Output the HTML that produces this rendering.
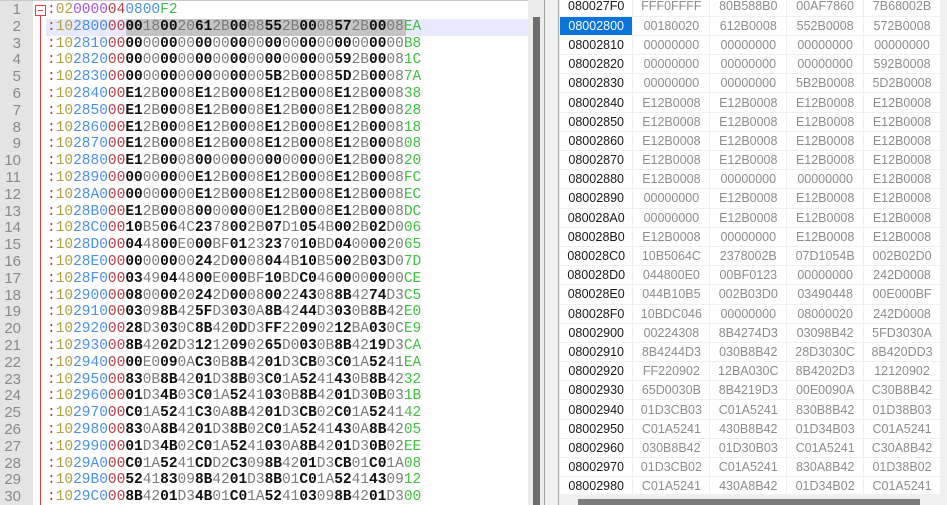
<!DOCTYPE html>
<html><head><meta charset="utf-8"><style>
*{margin:0;padding:0;box-sizing:border-box}
body{width:947px;height:505px;overflow:hidden;background:#f0f0f0;position:relative;font-family:"Liberation Sans",sans-serif}
#ed{position:absolute;left:0;top:0;width:528px;height:505px;background:#fff;border-top:1px solid #c8c8c8;overflow:hidden}
#gut{position:absolute;left:0;top:0;width:33px;height:505px;background:#e4e4e4}
#fold{position:absolute;left:40px;top:14px;width:1px;height:491px;background:#e04040}
#fbox{position:absolute;left:35px;top:4px;width:11px;height:11px;border:1px solid #e04040;background:#fff}
#fbox:after{content:"";position:absolute;left:2px;top:4px;width:5px;height:1px;background:#e04040}
#hl{position:absolute;left:46px;top:18px;width:482px;height:17px;background:#e8e8ff}
#sel{position:absolute;left:126px;top:18px;width:280px;height:17px;background:#c4c4c4}
#nums{position:absolute;left:0;top:1px;width:21px;text-align:right;font:15px/16.8px "Liberation Sans",sans-serif;color:#8a8a8a}
#code{position:absolute;left:47px;top:1px;font:14.5px/16.8px "Liberation Mono",monospace;white-space:nowrap;color:#888}
#code p{height:16.8px;white-space:nowrap}
r{color:#b04048}o{color:#b0a040}a{color:#4a90e8}u{color:#b050e0;text-decoration:none}
b{color:#111;font-weight:bold}i{font-style:normal;color:#7a7a7a}g{color:#40c040}
#vs{position:absolute;left:528px;top:0;width:17px;height:505px;background:#ececec;border-right:1px solid #a0a0a0}
#vs div{position:absolute;left:5px;top:17px;width:7px;height:488px;background:#6e6e6e}
#rp{position:absolute;left:558px;top:0;width:389px;height:505px;background:#f0f0f0;border-left:1px solid #a8a8a8}
#tb{position:absolute;left:1px;top:0;width:381px;height:494px;background:#fff;overflow:hidden}
table{border-collapse:collapse;position:absolute;left:0;top:-3px;font-size:12.5px}
td{height:19.2px;border-bottom:1px solid #edf0f3;border-right:1px solid #edf0f3;color:#8c8c8c;text-align:center;padding:0}
td:first-child{color:#1a1a1a;width:74px}
td.c{width:78px}
td.s{background:#0a74d8;color:#fff}
#hs{position:absolute;left:19px;top:499px;width:342px;height:6px;background:#7c7c7c}
</style></head><body>
<div id="ed">
<div id="gut"></div>
<div id="hl"></div><div id="sel"></div>
<div id="fold"></div><div id="fbox"></div>
<div id="nums">1<br>2<br>3<br>4<br>5<br>6<br>7<br>8<br>9<br>10<br>11<br>12<br>13<br>14<br>15<br>16<br>17<br>18<br>19<br>20<br>21<br>22<br>23<br>24<br>25<br>26<br>27<br>28<br>29<br>30</div>
<div id="code"><p><r>:</r><o>02</o><u>0000</u><r>04</r><a>0800</a><g>F2</g></p><p><r>:</r><o>10</o><a>2800</a><r>00</r><b>00</b><i>18</i><b>00</b><i>20</i><b>61</b><i>2B</i><b>00</b><i>08</i><b>55</b><i>2B</i><b>00</b><i>08</i><b>57</b><i>2B</i><b>00</b><i>08</i><g>EA</g></p><p><r>:</r><o>10</o><a>2810</a><r>00</r><b>00</b><i>00</i><b>00</b><i>00</i><b>00</b><i>00</i><b>00</b><i>00</i><b>00</b><i>00</i><b>00</b><i>00</i><b>00</b><i>00</i><b>00</b><i>00</i><g>B8</g></p><p><r>:</r><o>10</o><a>2820</a><r>00</r><b>00</b><i>00</i><b>00</b><i>00</i><b>00</b><i>00</i><b>00</b><i>00</i><b>00</b><i>00</i><b>00</b><i>00</i><b>59</b><i>2B</i><b>00</b><i>08</i><g>1C</g></p><p><r>:</r><o>10</o><a>2830</a><r>00</r><b>00</b><i>00</i><b>00</b><i>00</i><b>00</b><i>00</i><b>00</b><i>00</i><b>5B</b><i>2B</i><b>00</b><i>08</i><b>5D</b><i>2B</i><b>00</b><i>08</i><g>7A</g></p><p><r>:</r><o>10</o><a>2840</a><r>00</r><b>E1</b><i>2B</i><b>00</b><i>08</i><b>E1</b><i>2B</i><b>00</b><i>08</i><b>E1</b><i>2B</i><b>00</b><i>08</i><b>E1</b><i>2B</i><b>00</b><i>08</i><g>38</g></p><p><r>:</r><o>10</o><a>2850</a><r>00</r><b>E1</b><i>2B</i><b>00</b><i>08</i><b>E1</b><i>2B</i><b>00</b><i>08</i><b>E1</b><i>2B</i><b>00</b><i>08</i><b>E1</b><i>2B</i><b>00</b><i>08</i><g>28</g></p><p><r>:</r><o>10</o><a>2860</a><r>00</r><b>E1</b><i>2B</i><b>00</b><i>08</i><b>E1</b><i>2B</i><b>00</b><i>08</i><b>E1</b><i>2B</i><b>00</b><i>08</i><b>E1</b><i>2B</i><b>00</b><i>08</i><g>18</g></p><p><r>:</r><o>10</o><a>2870</a><r>00</r><b>E1</b><i>2B</i><b>00</b><i>08</i><b>E1</b><i>2B</i><b>00</b><i>08</i><b>E1</b><i>2B</i><b>00</b><i>08</i><b>E1</b><i>2B</i><b>00</b><i>08</i><g>08</g></p><p><r>:</r><o>10</o><a>2880</a><r>00</r><b>E1</b><i>2B</i><b>00</b><i>08</i><b>00</b><i>00</i><b>00</b><i>00</i><b>00</b><i>00</i><b>00</b><i>00</i><b>E1</b><i>2B</i><b>00</b><i>08</i><g>20</g></p><p><r>:</r><o>10</o><a>2890</a><r>00</r><b>00</b><i>00</i><b>00</b><i>00</i><b>E1</b><i>2B</i><b>00</b><i>08</i><b>E1</b><i>2B</i><b>00</b><i>08</i><b>E1</b><i>2B</i><b>00</b><i>08</i><g>FC</g></p><p><r>:</r><o>10</o><a>28A0</a><r>00</r><b>00</b><i>00</i><b>00</b><i>00</i><b>E1</b><i>2B</i><b>00</b><i>08</i><b>E1</b><i>2B</i><b>00</b><i>08</i><b>E1</b><i>2B</i><b>00</b><i>08</i><g>EC</g></p><p><r>:</r><o>10</o><a>28B0</a><r>00</r><b>E1</b><i>2B</i><b>00</b><i>08</i><b>00</b><i>00</i><b>00</b><i>00</i><b>E1</b><i>2B</i><b>00</b><i>08</i><b>E1</b><i>2B</i><b>00</b><i>08</i><g>DC</g></p><p><r>:</r><o>10</o><a>28C0</a><r>00</r><b>10</b><i>B5</i><b>06</b><i>4C</i><b>23</b><i>78</i><b>00</b><i>2B</i><b>07</b><i>D1</i><b>05</b><i>4B</i><b>00</b><i>2B</i><b>02</b><i>D0</i><g>06</g></p><p><r>:</r><o>10</o><a>28D0</a><r>00</r><b>04</b><i>48</i><b>00</b><i>E0</i><b>00</b><i>BF</i><b>01</b><i>23</i><b>23</b><i>70</i><b>10</b><i>BD</i><b>04</b><i>00</i><b>00</b><i>20</i><g>65</g></p><p><r>:</r><o>10</o><a>28E0</a><r>00</r><b>00</b><i>00</i><b>00</b><i>00</i><b>24</b><i>2D</i><b>00</b><i>08</i><b>04</b><i>4B</i><b>10</b><i>B5</i><b>00</b><i>2B</i><b>03</b><i>D0</i><g>7D</g></p><p><r>:</r><o>10</o><a>28F0</a><r>00</r><b>03</b><i>49</i><b>04</b><i>48</i><b>00</b><i>E0</i><b>00</b><i>BF</i><b>10</b><i>BD</i><b>C0</b><i>46</i><b>00</b><i>00</i><b>00</b><i>00</i><g>CE</g></p><p><r>:</r><o>10</o><a>2900</a><r>00</r><b>08</b><i>00</i><b>00</b><i>20</i><b>24</b><i>2D</i><b>00</b><i>08</i><b>00</b><i>22</i><b>43</b><i>08</i><b>8B</b><i>42</i><b>74</b><i>D3</i><g>C5</g></p><p><r>:</r><o>10</o><a>2910</a><r>00</r><b>03</b><i>09</i><b>8B</b><i>42</i><b>5F</b><i>D3</i><b>03</b><i>0A</i><b>8B</b><i>42</i><b>44</b><i>D3</i><b>03</b><i>0B</i><b>8B</b><i>42</i><g>E0</g></p><p><r>:</r><o>10</o><a>2920</a><r>00</r><b>28</b><i>D3</i><b>03</b><i>0C</i><b>8B</b><i>42</i><b>0D</b><i>D3</i><b>FF</b><i>22</i><b>09</b><i>02</i><b>12</b><i>BA</i><b>03</b><i>0C</i><g>E9</g></p><p><r>:</r><o>10</o><a>2930</a><r>00</r><b>8B</b><i>42</i><b>02</b><i>D3</i><b>12</b><i>12</i><b>09</b><i>02</i><b>65</b><i>D0</i><b>03</b><i>0B</i><b>8B</b><i>42</i><b>19</b><i>D3</i><g>CA</g></p><p><r>:</r><o>10</o><a>2940</a><r>00</r><b>00</b><i>E0</i><b>09</b><i>0A</i><b>C3</b><i>0B</i><b>8B</b><i>42</i><b>01</b><i>D3</i><b>CB</b><i>03</i><b>C0</b><i>1A</i><b>52</b><i>41</i><g>EA</g></p><p><r>:</r><o>10</o><a>2950</a><r>00</r><b>83</b><i>0B</i><b>8B</b><i>42</i><b>01</b><i>D3</i><b>8B</b><i>03</i><b>C0</b><i>1A</i><b>52</b><i>41</i><b>43</b><i>0B</i><b>8B</b><i>42</i><g>32</g></p><p><r>:</r><o>10</o><a>2960</a><r>00</r><b>01</b><i>D3</i><b>4B</b><i>03</i><b>C0</b><i>1A</i><b>52</b><i>41</i><b>03</b><i>0B</i><b>8B</b><i>42</i><b>01</b><i>D3</i><b>0B</b><i>03</i><g>1B</g></p><p><r>:</r><o>10</o><a>2970</a><r>00</r><b>C0</b><i>1A</i><b>52</b><i>41</i><b>C3</b><i>0A</i><b>8B</b><i>42</i><b>01</b><i>D3</i><b>CB</b><i>02</i><b>C0</b><i>1A</i><b>52</b><i>41</i><g>42</g></p><p><r>:</r><o>10</o><a>2980</a><r>00</r><b>83</b><i>0A</i><b>8B</b><i>42</i><b>01</b><i>D3</i><b>8B</b><i>02</i><b>C0</b><i>1A</i><b>52</b><i>41</i><b>43</b><i>0A</i><b>8B</b><i>42</i><g>05</g></p><p><r>:</r><o>10</o><a>2990</a><r>00</r><b>01</b><i>D3</i><b>4B</b><i>02</i><b>C0</b><i>1A</i><b>52</b><i>41</i><b>03</b><i>0A</i><b>8B</b><i>42</i><b>01</b><i>D3</i><b>0B</b><i>02</i><g>EE</g></p><p><r>:</r><o>10</o><a>29A0</a><r>00</r><b>C0</b><i>1A</i><b>52</b><i>41</i><b>CD</b><i>D2</i><b>C3</b><i>09</i><b>8B</b><i>42</i><b>01</b><i>D3</i><b>CB</b><i>01</i><b>C0</b><i>1A</i><g>08</g></p><p><r>:</r><o>10</o><a>29B0</a><r>00</r><b>52</b><i>41</i><b>83</b><i>09</i><b>8B</b><i>42</i><b>01</b><i>D3</i><b>8B</b><i>01</i><b>C0</b><i>1A</i><b>52</b><i>41</i><b>43</b><i>09</i><g>12</g></p><p><r>:</r><o>10</o><a>29C0</a><r>00</r><b>8B</b><i>42</i><b>01</b><i>D3</i><b>4B</b><i>01</i><b>C0</b><i>1A</i><b>52</b><i>41</i><b>03</b><i>09</i><b>8B</b><i>42</i><b>01</b><i>D3</i><g>00</g></p></div>
</div>
<div id="vs"><div></div></div>
<div id="rp"><div id="tb"><table>
<tr><td>080027F0</td><td class="c">FFF0FFFF</td><td class="c">80B588B0</td><td class="c">00AF7860</td><td class="c">7B68002B</td></tr>
<tr><td class="s">08002800</td><td class="c">00180020</td><td class="c">612B0008</td><td class="c">552B0008</td><td class="c">572B0008</td></tr>
<tr><td>08002810</td><td class="c">00000000</td><td class="c">00000000</td><td class="c">00000000</td><td class="c">00000000</td></tr>
<tr><td>08002820</td><td class="c">00000000</td><td class="c">00000000</td><td class="c">00000000</td><td class="c">592B0008</td></tr>
<tr><td>08002830</td><td class="c">00000000</td><td class="c">00000000</td><td class="c">5B2B0008</td><td class="c">5D2B0008</td></tr>
<tr><td>08002840</td><td class="c">E12B0008</td><td class="c">E12B0008</td><td class="c">E12B0008</td><td class="c">E12B0008</td></tr>
<tr><td>08002850</td><td class="c">E12B0008</td><td class="c">E12B0008</td><td class="c">E12B0008</td><td class="c">E12B0008</td></tr>
<tr><td>08002860</td><td class="c">E12B0008</td><td class="c">E12B0008</td><td class="c">E12B0008</td><td class="c">E12B0008</td></tr>
<tr><td>08002870</td><td class="c">E12B0008</td><td class="c">E12B0008</td><td class="c">E12B0008</td><td class="c">E12B0008</td></tr>
<tr><td>08002880</td><td class="c">E12B0008</td><td class="c">00000000</td><td class="c">00000000</td><td class="c">E12B0008</td></tr>
<tr><td>08002890</td><td class="c">00000000</td><td class="c">E12B0008</td><td class="c">E12B0008</td><td class="c">E12B0008</td></tr>
<tr><td>080028A0</td><td class="c">00000000</td><td class="c">E12B0008</td><td class="c">E12B0008</td><td class="c">E12B0008</td></tr>
<tr><td>080028B0</td><td class="c">E12B0008</td><td class="c">00000000</td><td class="c">E12B0008</td><td class="c">E12B0008</td></tr>
<tr><td>080028C0</td><td class="c">10B5064C</td><td class="c">2378002B</td><td class="c">07D1054B</td><td class="c">002B02D0</td></tr>
<tr><td>080028D0</td><td class="c">044800E0</td><td class="c">00BF0123</td><td class="c">00000000</td><td class="c">242D0008</td></tr>
<tr><td>080028E0</td><td class="c">044B10B5</td><td class="c">002B03D0</td><td class="c">03490448</td><td class="c">00E000BF</td></tr>
<tr><td>080028F0</td><td class="c">10BDC046</td><td class="c">00000000</td><td class="c">08000020</td><td class="c">242D0008</td></tr>
<tr><td>08002900</td><td class="c">00224308</td><td class="c">8B4274D3</td><td class="c">03098B42</td><td class="c">5FD3030A</td></tr>
<tr><td>08002910</td><td class="c">8B4244D3</td><td class="c">030B8B42</td><td class="c">28D3030C</td><td class="c">8B420DD3</td></tr>
<tr><td>08002920</td><td class="c">FF220902</td><td class="c">12BA030C</td><td class="c">8B4202D3</td><td class="c">12120902</td></tr>
<tr><td>08002930</td><td class="c">65D0030B</td><td class="c">8B4219D3</td><td class="c">00E0090A</td><td class="c">C30B8B42</td></tr>
<tr><td>08002940</td><td class="c">01D3CB03</td><td class="c">C01A5241</td><td class="c">830B8B42</td><td class="c">01D38B03</td></tr>
<tr><td>08002950</td><td class="c">C01A5241</td><td class="c">430B8B42</td><td class="c">01D34B03</td><td class="c">C01A5241</td></tr>
<tr><td>08002960</td><td class="c">030B8B42</td><td class="c">01D30B03</td><td class="c">C01A5241</td><td class="c">C30A8B42</td></tr>
<tr><td>08002970</td><td class="c">01D3CB02</td><td class="c">C01A5241</td><td class="c">830A8B42</td><td class="c">01D38B02</td></tr>
<tr><td>08002980</td><td class="c">C01A5241</td><td class="c">430A8B42</td><td class="c">01D34B02</td><td class="c">C01A5241</td></tr>
</table></div><div id="hs"></div></div>
</body></html>
